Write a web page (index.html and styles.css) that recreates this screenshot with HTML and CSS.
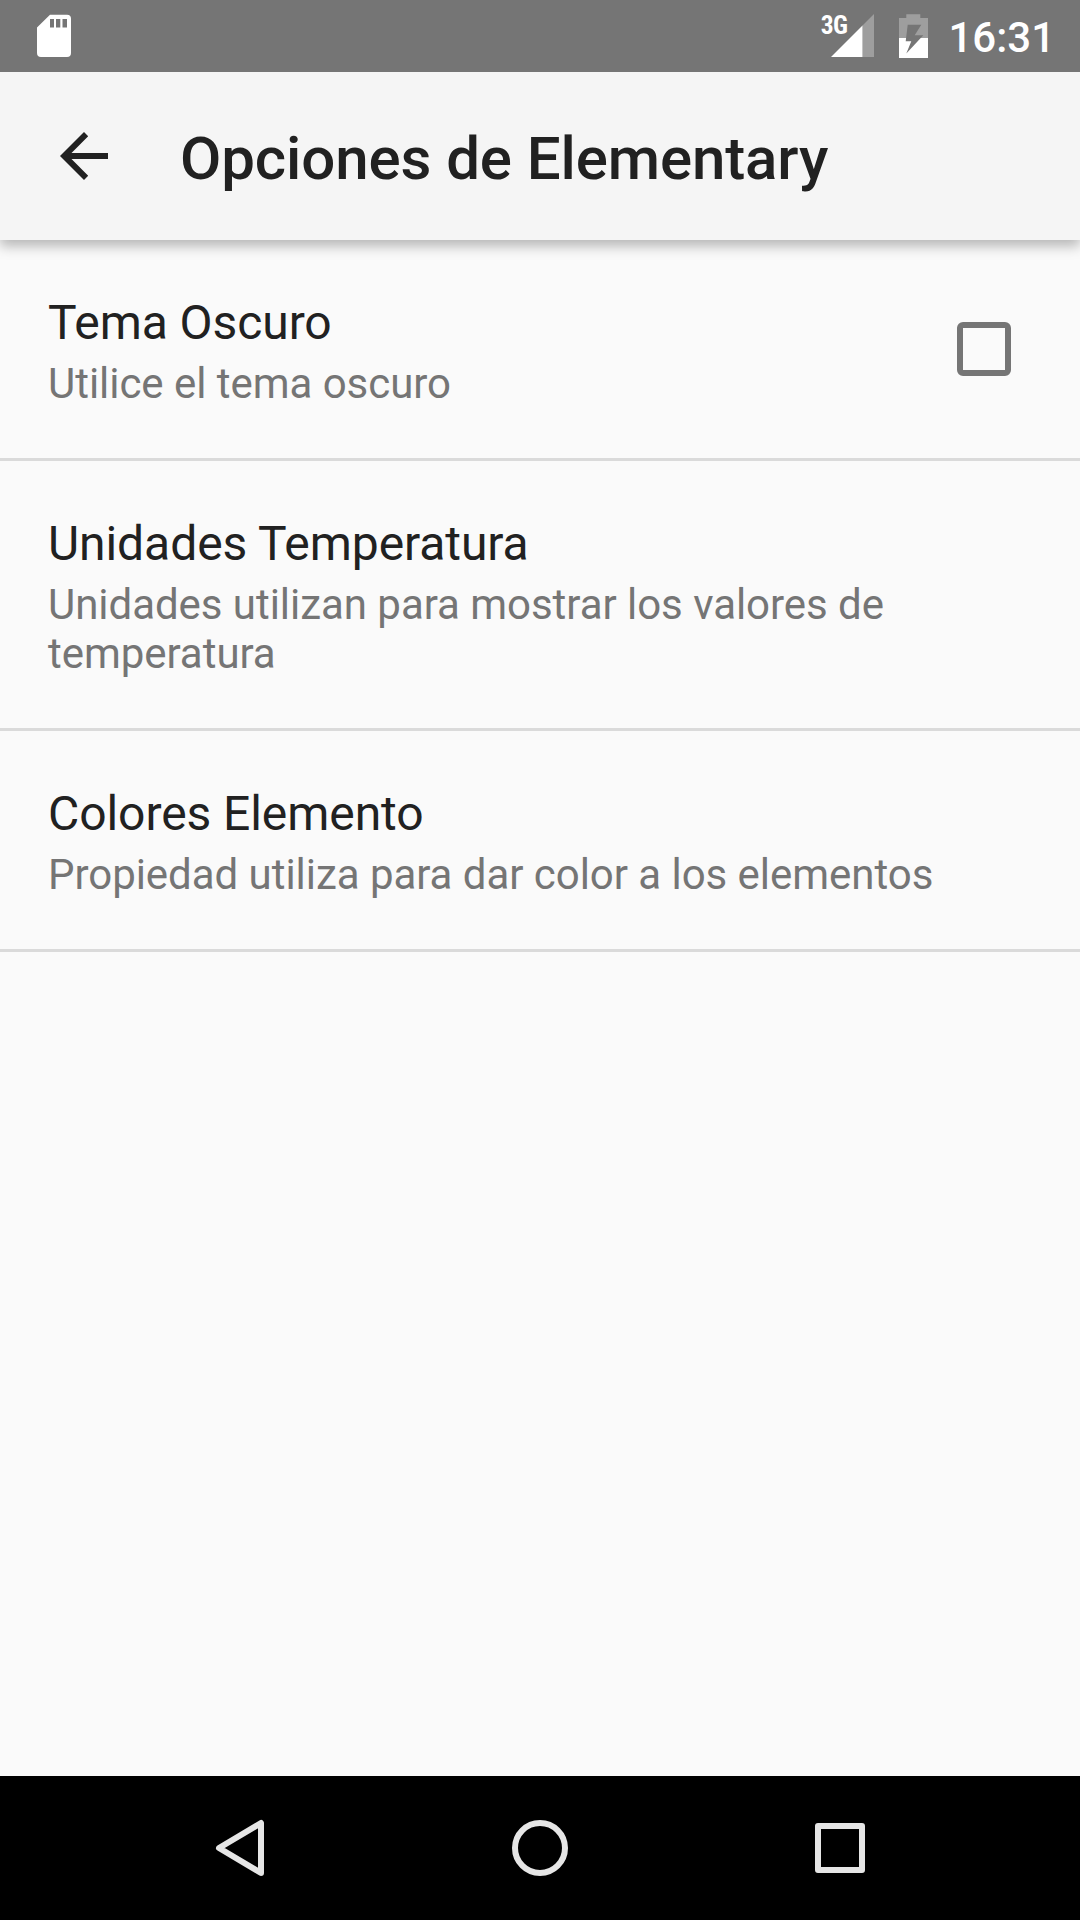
FILE: index.html
```html
<!DOCTYPE html>
<html lang="es">
<head>
<meta charset="utf-8">
<title>Opciones de Elementary</title>
<link rel="stylesheet" href="styles.css">
</head>
<body>
<header class="status">
  <svg class="sd" width="36" height="44" viewBox="0 0 36 44"><path fill="#fff" fill-rule="evenodd" d="M14 .7H31Q35 .7 35 4.7V39Q35 43 31 43H5Q1 43 1 39V13.5ZM14 5V13.5H18V5ZM20 5V13.5H24.3V5ZM26.5 5V13.5H31V5Z"/></svg>
  <span class="net">3G</span>
  <svg class="signal" width="43" height="43" viewBox="0 0 43 43"><path fill="#fff" fill-opacity=".3" d="M31.5 11.5L43 0V43H31.5Z"/><path fill="#fff" d="M0 43L31.5 11.5V43Z"/></svg>
  <svg class="battery" width="29" height="44" viewBox="0 0 29 44"><path fill="#fff" fill-opacity=".3" d="M7.3 .3H21.3V4H29V24H0V4H7.3Z"/><path fill="#fff" d="M0 24H29V44H0Z"/><path fill="#757575" d="M8.7 10.7H22.3L15.7 21.3H24.3L7.3 39.5L12.3 27.3H6.7Z"/></svg>
  <time>16:31</time>
</header>
<div class="bar">
  <svg class="back" width="48" height="48" viewBox="0 0 48 48"><path fill="#212121" d="M48 21H11.5L28.2 4.2L24 0L0 24L24 48L28.2 43.8L11.5 27H48Z"/></svg>
  <h1>Opciones de Elementary</h1>
</div>
<main>
  <section class="row"><div><h2>Tema Oscuro</h2><p>Utilice el tema oscuro</p></div><span class="check"></span></section>
  <section class="row"><div><h2>Unidades Temperatura</h2><p>Unidades utilizan para mostrar los valores de temperatura</p></div></section>
  <section class="row"><div><h2>Colores Elemento</h2><p>Propiedad utiliza para dar color a los elementos</p></div></section>
</main>
<nav class="nav">
  <svg width="60" height="60" viewBox="0 0 60 60"><path d="M51 5V55L9 30Z"/></svg>
  <svg width="60" height="60" viewBox="0 0 60 60"><circle cx="30" cy="30" r="25"/></svg>
  <svg width="60" height="60" viewBox="0 0 60 60"><rect x="8" y="8" width="44" height="44"/></svg>
</nav>
</body>
</html>
```
FILE: styles.css
```css
* { box-sizing: border-box; }
body { margin: 0; width: 1080px; height: 1920px; display: flex; flex-direction: column; background: #fafafa; color: #212121; font-family: Roboto, sans-serif; }
h1, h2, p { margin: 0; font-weight: 400; }
svg { display: block; flex: none; }
.status { height: 72px; background: #757575; color: #fff; display: flex; padding: 14px 25px 0 36px; }
.net { margin-left: auto; font: 700 25.5px/22px "Roboto Condensed", Roboto, sans-serif; letter-spacing: -.6px; }
.signal { margin-left: -16px; }
.battery { margin: 0 20px 0 25px; }
time { font: 500 42px/48px Roboto, sans-serif; }
.bar { height: 168px; background: #f5f5f5; display: flex; align-items: center; padding-left: 60px; box-shadow: 0 6px 12px rgba(0,0,0,.28); clip-path: inset(0 0 -20px 0); }
.bar h1 { margin-left: 72px; padding-top: 4px; font-size: 60px; font-weight: 500; letter-spacing: -.1px; }
.row { display: flex; align-items: center; justify-content: space-between; padding: 50px 69px 50px 48px; border-bottom: 3px solid #dadada; }
.row h2 { margin-bottom: 3px; font-size: 48px; line-height: 66px; letter-spacing: -.07px; }
.row p { font-size: 42px; line-height: 49px; letter-spacing: -.04px; color: #757575; }
.check { width: 54px; height: 54px; border: 6px solid #757575; border-radius: 6px; }
.nav { margin-top: auto; height: 144px; background: #000; display: flex; justify-content: space-between; align-items: center; padding: 0 210px; }
.nav svg { fill: none; stroke: #e6e6e6; stroke-width: 6; stroke-linejoin: round; }
```
